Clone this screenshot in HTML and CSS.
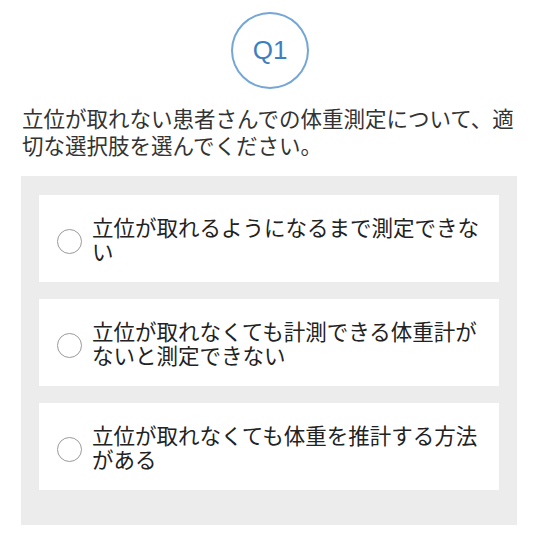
FILE: index.html
```html
<!DOCTYPE html>
<html lang="ja">
<head>
<meta charset="utf-8">
<link rel="stylesheet" href="styles.css">
</head>
<body>
<div class="page">
  <div class="badge-row">
    <div class="badge">Q1</div>
  </div>
  <p class="question">立位が取れない患者さんでの体重測定について、適切な選択肢を選んでください。</p>
  <div class="choices">
    <label class="choice"><span class="radio"></span><span class="label">立位が取れるようになるまで測定できない</span></label>
    <label class="choice"><span class="radio"></span><span class="label">立位が取れなくても計測できる体重計がないと測定できない</span></label>
    <label class="choice"><span class="radio"></span><span class="label">立位が取れなくても体重を推計する方法がある</span></label>
  </div>
</div>
</body>
</html>
```

FILE: styles.css
```css
* { box-sizing: border-box; }
html, body { margin: 0; padding: 0; background: #ffffff; }
body {
  font-family: "Noto Sans CJK JP", "Noto Sans", sans-serif;
  color: #333333;
}
.page {
  padding: 12px 19px 0 21px;
}
.badge-row {
  display: flex;
  justify-content: center;
  padding-left: 2px;
}
.badge {
  width: 78px;
  height: 77px;
  border: 2px solid #74a6d6;
  border-radius: 50%;
  display: flex;
  align-items: center;
  justify-content: center;
  font-family: "Liberation Sans", Arial, sans-serif;
  font-size: 26px;
  color: #3e7fc0;
  padding-bottom: 1px;
}
.question {
  margin: 15px 0 0 0;
  padding-left: 1px;
  font-size: 21.5px;
  line-height: 27px;
  color: #333333;
}
.choices {
  margin-top: 18px;
  background: #ececec;
  padding: 19px 18px 35px 18px;
  display: flex;
  flex-direction: column;
  gap: 17px;
}
.choice {
  background: #ffffff;
  height: 87px;
  display: flex;
  align-items: center;
  padding: 0 18px 0 18px;
}
.radio {
  flex: none;
  width: 25px;
  height: 25px;
  border: 1.5px solid #9a9a9a;
  border-radius: 50%;
  margin-top: 5px;
  margin-right: 10px;
}
.label {
  font-size: 21.5px;
  line-height: 24px;
  color: #222222;
}
```
